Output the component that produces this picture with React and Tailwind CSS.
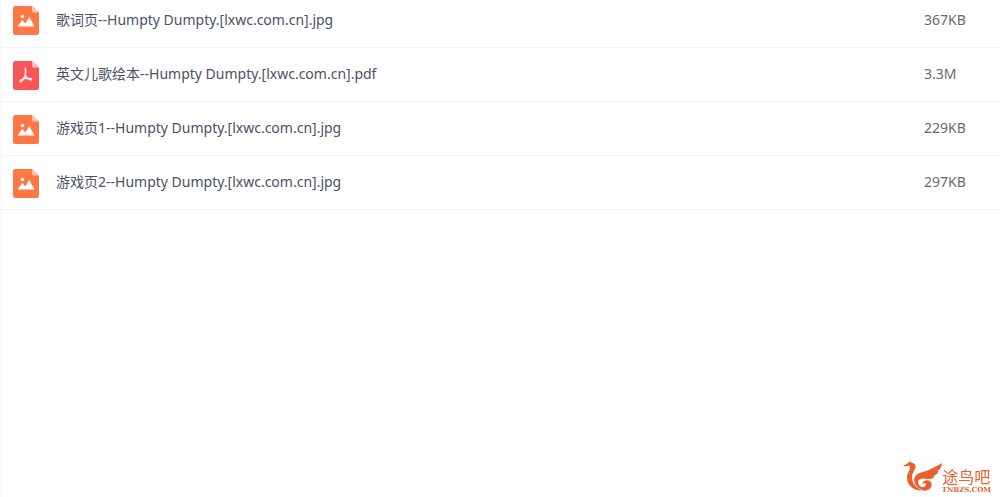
const files = [
  { name: '歌词页--Humpty Dumpty.[lxwc.com.cn].jpg', size: '367KB', type: 'image' },
  { name: '英文儿歌绘本--Humpty Dumpty.[lxwc.com.cn].pdf', size: '3.3M', type: 'pdf' },
  { name: '游戏页1--Humpty Dumpty.[lxwc.com.cn].jpg', size: '229KB', type: 'image' },
  { name: '游戏页2--Humpty Dumpty.[lxwc.com.cn].jpg', size: '297KB', type: 'image' },
];

function FileIcon({ type }) {
  const pdf = type === 'pdf';
  return (
    <svg className="block h-[29px] w-[26px]" viewBox="0 0 26 29" aria-hidden="true">
      <path d="M2.500 0H19l7 6.500v20a2.500 2.500 0 0 1-2.500 2.500h-21A2.500 2.500 0 0 1 0 26.500V2.500A2.500 2.500 0 0 1 2.500 0Z" fill={pdf ? '#fc5558' : '#ff7744'} />
      <path d="M19 0l7 6.500h-5.500A1.500 1.500 0 0 1 19 5Z" fill={pdf ? '#ffb9ba' : '#ffc7b0'} />
      {pdf ? (
        <path d="M12.200 7.500c1.300 2 0 5 0 7-.8 2.700-2.700 5.300-5 6.500M12.200 14.500c1.500 2.500 3.500 4 6.300 4.200M7.300 19.500c3-2 7-2.800 11.200-1.700" fill="none" stroke="#fff" strokeOpacity=".88" strokeWidth="1.600" strokeLinecap="round" />
      ) : (
        <g fill="#fff">
          <circle cx="9.500" cy="10.500" r="1.700" />
          <path d="M4.500 20.500l4.800-6.500 3 3.500 4-6.500 5.200 9.500Z" />
        </g>
      )}
    </svg>
  );
}

function Watermark() {
  return (
    <div className="fixed right-[9px] bottom-0.5 flex items-end text-[#e8602c]">
      <svg className="mb-1 h-[30px] w-10" viewBox="0 0 120 90" fill="currentColor" aria-hidden="true">
        <path d="M3 15C9 10 14 11 18 6C22 2 25 4 27 0C28 2 28 3 28 5C38 6 43 13 40 22C36 33 30 37 30 48C30 65 40 79 60 89C31 88 14 70 15 48C16 35 24 28 24 20C23 12 16 15 11 16C8 16 6 14 3 15Z" />
        <path d="M66 89C46 84 33 67 37 51C43 34 62 35 80 27C96 20 107 14 119 6C120 18 114 26 105 30L110 31C107 39 101 43 94 45L98 47C92 53 84 55 75 54C62 51 49 52 48 64C49 75 57 80 65 78C73 75 73 69 69 67C65 66 62 68 61 71C61 57 80 54 87 64C94 76 83 90 66 89Z" />
      </svg>
      <div className="flex flex-col items-center">
        <span className="font-['Noto_Sans_CJK_SC',sans-serif] text-base leading-4">途鸟吧</span>
        <span className="font-['DejaVu_Serif',serif] text-[7px] leading-[11px] font-bold">TNBZS.COM</span>
      </div>
    </div>
  );
}

export default function App() {
  return (
    <main className="flow-root min-h-screen border-l border-[#f7f7f7] bg-white font-['Noto_Sans','Noto_Sans_CJK_SC',sans-serif] text-sm leading-6">
      <table className="-mt-[7px] w-full border-collapse" aria-label="文件列表">
        <tbody>
          {files.map((file) => (
            <tr key={file.name} className="h-[54px] border-b border-[#f3f4f5]">
              <td className="w-[55px] pt-0.5 pl-3">
                <FileIcon type={file.type} />
              </td>
              <td className="text-[#4a5264]">{file.name}</td>
              <td className="w-[76px] text-[#6b6b6b]">{file.size}</td>
            </tr>
          ))}
        </tbody>
      </table>
      <Watermark />
    </main>
  );
}
